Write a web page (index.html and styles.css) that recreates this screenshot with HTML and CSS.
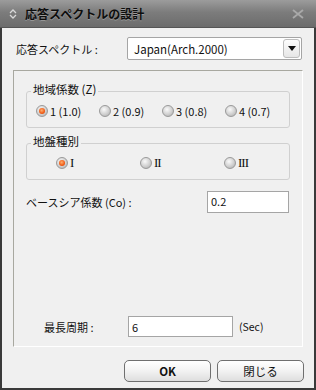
FILE: index.html
```html
<!DOCTYPE html>
<html lang="ja">
<head>
  <meta charset="UTF-8" />
  <title>応答スペクトルの設計</title>
  <link rel="stylesheet" href="styles.css">
</head>
<body>
  <div class="window">
    <div class="titlebar">
      <svg class="ti-icon" width="8" height="10" viewBox="0 0 8 10">
        <path d="M1 4 L4 1 L7 4 M1 6 L4 9 L7 6" fill="none" stroke="#d8d8d8" stroke-width="1.3"/>
      </svg>
      <span class="title">応答スペクトルの設計</span>
      <svg class="close" width="12" height="10" viewBox="0 0 12 10">
        <path d="M1 1 L11 9 M11 1 L1 9" stroke="#a9a9a9" stroke-width="1.8"/>
      </svg>
    </div>

    <div class="body">
      <div class="spec">
        <span class="spec-label">応答スペクトル :</span>
        <div class="select">
          <span class="select-text">Japan(Arch.2000)</span>
          <span class="arrow">
            <svg width="8" height="5" viewBox="0 0 8 5"><path d="M0 0 H8 L4 5 Z" fill="#111"/></svg>
          </span>
        </div>
      </div>

      <div class="panel">
        <fieldset class="group zone">
          <legend>地域係数 (Z)</legend>
          <div class="radios">
            <span class="opt"><span class="radio on"></span>1 (1.0)</span>
            <span class="opt"><span class="radio"></span>2 (0.9)</span>
            <span class="opt"><span class="radio"></span>3 (0.8)</span>
            <span class="opt"><span class="radio"></span>4 (0.7)</span>
          </div>
        </fieldset>

        <fieldset class="group soil">
          <legend>地盤種別</legend>
          <div class="radios">
            <span class="opt"><span class="radio on"></span><span class="roman">I</span></span>
            <span class="opt"><span class="radio"></span><span class="roman">II</span></span>
            <span class="opt"><span class="radio"></span><span class="roman">III</span></span>
          </div>
        </fieldset>

        <div class="co">
          <span class="co-label">ベースシア係数 (Co) :</span>
          <div class="input co-input">0.2</div>
        </div>

        <div class="spacer"></div>

        <div class="period">
          <span class="period-label">最長周期 :</span>
          <div class="input period-input">6</div>
          <span class="unit">(Sec)</span>
        </div>
      </div>

      <div class="buttons">
        <button class="btn ok">OK</button>
        <button class="btn">閉じる</button>
      </div>
    </div>
  </div>
</body>
</html>
```

FILE: styles.css
```css
* { box-sizing: border-box; }
body { margin: 0; font-family: "Noto Sans CJK JP", "Liberation Sans", sans-serif; font-size: 11px; color: #111; }

.window { width: 316px; height: 390px; display: flex; flex-direction: column; background: #f0f0f0; }

.titlebar { height: 28px; display: flex; align-items: center; padding: 0 8px 0 9px;
  background: linear-gradient(#9c9c9c, #7c7c7c 45%, #6c6c6c); border-bottom: 1px solid #555; }
.ti-icon { margin-right: 8px; }
.title { font-size: 12px; font-weight: bold; color: #0d0d0d; text-shadow: 0 1px 0 rgba(255,255,255,.25); flex: 1; }
.close { margin-right: 4px; }

.body { flex: 1; display: flex; flex-direction: column; border: 2px solid #3a3a3a; border-top: none; }

.spec { display: flex; align-items: center; margin-top: 9px; padding-left: 14px; }
.spec-label { width: 111px; }
.select { width: 175px; height: 23px; background: #fff; border: 1px solid #a5a5a5; border-radius: 2px;
  display: flex; align-items: center; padding: 0 1px 0 6px; }
.select-text { flex: 1; font-size: 11.5px; }
.arrow { width: 17px; height: 19px; border: 1px solid #bdbdbd; border-radius: 3px;
  background: linear-gradient(#fdfdfd, #e6e6e6); display: flex; align-items: center; justify-content: center; }

.panel { width: 290px; height: 277px; margin: 10px 0 0 11px; padding: 12px 12px 9px;
  border: 1px solid; border-color: #a8a8a0 #fff #fff #a8a8a0; display: flex; flex-direction: column; }

.group { margin: 0; padding: 0 0 10px; border: 1px solid #d0d0d0; border-radius: 3px; min-width: 0; }
.group legend { margin-left: 4px; padding: 0 2px 4px; line-height: 12px; font-size: 11.5px; }
.soil { margin-top: 7px; }

.radios { display: grid; margin-top: 4px; height: 14px; align-items: center; }
.zone .radios { grid-template-columns: repeat(4, 63px); padding-left: 9px; }
.soil .radios { grid-template-columns: repeat(3, 84px); padding-left: 29px; }
.opt { display: flex; align-items: center; white-space: nowrap; }
.radio { width: 12px; height: 12px; border-radius: 50%; margin-right: 2px; border: 1px solid #9a9a9a;
  background: radial-gradient(circle at 40% 35%, #fafafa, #d0d0d0 55%, #a8a8a8); position: relative; }
.radio.on::after { content: ""; position: absolute; left: 2px; top: 2px; width: 6px; height: 6px; border-radius: 50%;
  background: radial-gradient(circle at 45% 40%, #ffb070, #f05a14 60%, #d04000); }
.roman { font-family: "Liberation Serif", serif; font-size: 13px; letter-spacing: -1px; }

.co { display: flex; align-items: center; margin-top: 11px; }
.co-label { width: 181px; }
.input { background: #fff; border: 1px solid #a5a5a5; padding: 0 3px; display: flex; align-items: center; }
.co-input { width: 82px; height: 22px; align-items: flex-start; padding-top: 1px; }

.spacer { flex: 1; }

.period { display: flex; align-items: center; padding-left: 18px; }
.period-label { width: 84px; }
.period-input { width: 105px; height: 21px; }
.unit { margin-left: 6px; font-size: 10.5px; }

.buttons { display: flex; justify-content: flex-end; gap: 6px; margin-top: 13px; padding-right: 10px; }
.btn { width: 87px; height: 22px; border: 1px solid #6f6f6f; border-radius: 5px; padding: 0;
  background: linear-gradient(#ffffff, #f2f2f2 50%, #dedede); font-family: inherit; font-size: 11.5px; color: #111; }
.btn.ok { font-weight: bold; }
```
